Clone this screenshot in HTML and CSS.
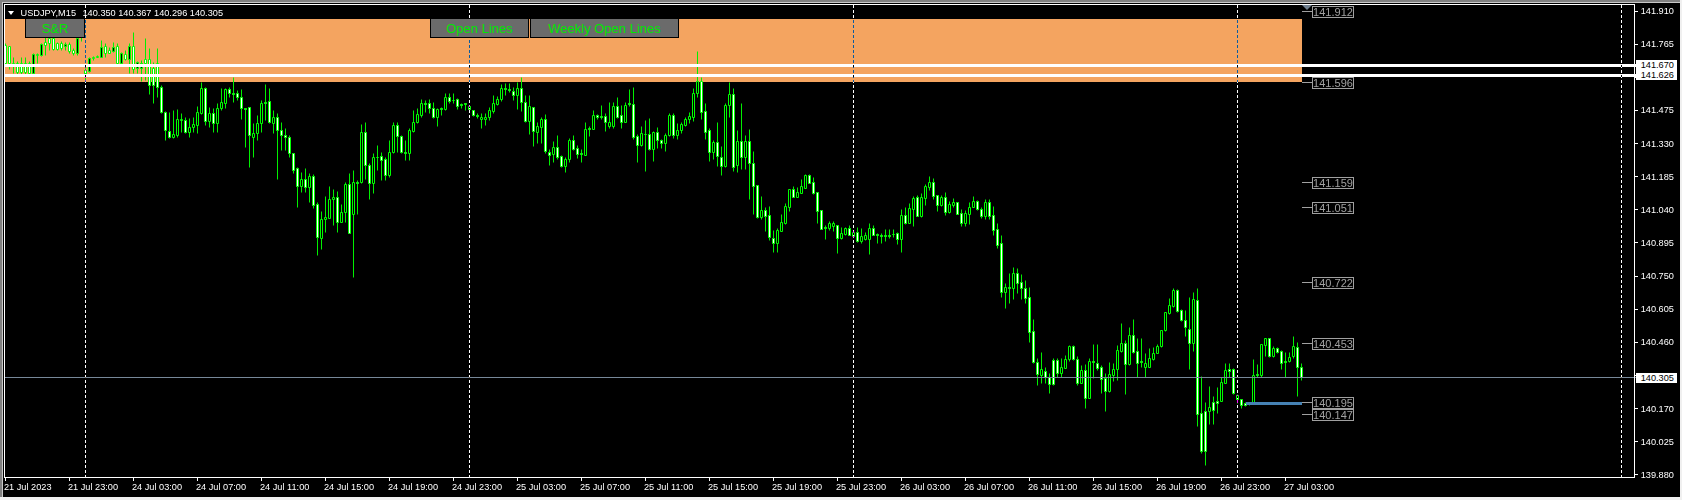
FILE: index.html
```html
<!DOCTYPE html>
<html lang="en">
<head>
<meta charset="utf-8">
<title>USDJPY,M15</title>
<link rel="stylesheet" href="styles.css">
</head>
<body>
<main class="terminal">
  <section class="plot">
    <svg class="chart" viewBox="5 5 1629 472" width="1629" height="472" aria-hidden="true">
      <rect class="zone" x="5" y="19" width="1297" height="63"/>
      <path id="wicks" class="wick"/>
      <path id="bodies-open" class="body-open"/>
      <path id="bodies-solid" class="body-solid"/>
      <rect class="level" x="5" y="64" width="1629" height="3"/>
      <rect class="level" x="5" y="74" width="1629" height="3"/>
      <rect class="bid" x="5" y="377" width="1629" height="1"/>
      <rect class="support" x="1246" y="402" width="56" height="3"/>
      <polygon class="marker" points="1302,5 1312,5 1307,10"/>
      <g class="periods">
        <line x1="85.5" y1="5" x2="85.5" y2="477"/>
        <line x1="469.5" y1="5" x2="469.5" y2="477"/>
        <line x1="853.5" y1="5" x2="853.5" y2="477"/>
        <line x1="1237.5" y1="5" x2="1237.5" y2="477"/>
        <line x1="1621.5" y1="5" x2="1621.5" y2="477"/>
      </g>
    </svg>

    <header class="legend">
      <span class="legend-arrow"></span>
      <span class="legend-symbol">USDJPY,M15</span>
      <span class="legend-quote">140.350 140.367 140.296 140.305</span>
    </header>

    <button class="tool tool-sr" type="button">S&amp;R</button>
    <button class="tool tool-open" type="button">Open Lines</button>
    <button class="tool tool-weekly" type="button">Weekly Open Lines</button>

    <span class="tag tag-1">141.912</span>
    <span class="tag tag-2">141.596</span>
    <span class="tag tag-3">141.159</span>
    <span class="tag tag-4">141.051</span>
    <span class="tag tag-5">140.722</span>
    <span class="tag tag-6">140.453</span>
    <span class="tag tag-7">140.195</span>
    <span class="tag tag-8">140.147</span>
  </section>

  <aside class="price-axis">
    <div class="price">141.910</div>
    <div class="price">141.765</div>
    <div class="price"></div>
    <div class="price">141.475</div>
    <div class="price">141.330</div>
    <div class="price">141.185</div>
    <div class="price">141.040</div>
    <div class="price">140.895</div>
    <div class="price">140.750</div>
    <div class="price">140.605</div>
    <div class="price">140.460</div>
    <div class="price"></div>
    <div class="price">140.170</div>
    <div class="price">140.025</div>
    <div class="price">139.880</div>
    <span class="flag flag-1">141.670</span>
    <span class="flag flag-2">141.626</span>
    <span class="flag flag-3">140.305</span>
  </aside>

  <footer class="time-axis">
    <div class="time">21 Jul 2023</div>
    <div class="time">21 Jul 23:00</div>
    <div class="time">24 Jul 03:00</div>
    <div class="time">24 Jul 07:00</div>
    <div class="time">24 Jul 11:00</div>
    <div class="time">24 Jul 15:00</div>
    <div class="time">24 Jul 19:00</div>
    <div class="time">24 Jul 23:00</div>
    <div class="time">25 Jul 03:00</div>
    <div class="time">25 Jul 07:00</div>
    <div class="time">25 Jul 11:00</div>
    <div class="time">25 Jul 15:00</div>
    <div class="time">25 Jul 19:00</div>
    <div class="time">25 Jul 23:00</div>
    <div class="time">26 Jul 03:00</div>
    <div class="time">26 Jul 07:00</div>
    <div class="time">26 Jul 11:00</div>
    <div class="time">26 Jul 15:00</div>
    <div class="time">26 Jul 19:00</div>
    <div class="time">26 Jul 23:00</div>
    <div class="time">27 Jul 03:00</div>
  </footer>
</main>
<script src="candles.js"></script>
</body>
</html>
```

FILE: styles.css
```css
html, body {
  margin: 0;
  height: 500px;
  background: #f0f0f0;
  overflow: hidden;
}

.terminal {
  box-sizing: border-box;
  width: 1680px;
  height: 497px;
  padding: 2px 0 0 2px;
  border-left: 2px solid #808080;
  border-top: 2px solid #808080;
  box-shadow: inset 1px 1px 0 #c8c8c8;
  background: #000;
  display: grid;
  grid-template-columns: 1631px 45px;
  grid-template-rows: 474px 19px;
  font: 9.2px/12px "Liberation Sans", Arial, sans-serif;
  color: #fff;
}

/* plot */
.plot {
  position: relative;
  box-sizing: border-box;
  border: 1px solid #fff;
  overflow: hidden;
}
.chart { display: block; }
.zone { fill: #f4a460; }
.wick { fill: none; stroke: #00f000; stroke-width: 1; }
.body-open { fill: #fff; stroke: #00ff00; stroke-width: 1; }
.body-solid { fill: #000; stroke: #00ff00; stroke-width: 1; }
.level { fill: #fff; }
.bid { fill: #778899; }
.support { fill: #4682b4; }
.marker { fill: #708090; }
.periods line {
  stroke: #fff;
  stroke-width: 1;
  stroke-dasharray: 3 2;
  mix-blend-mode: difference;
}

/* legend */
.legend {
  position: absolute;
  left: 3px;
  top: 2px;
  display: flex;
  align-items: center;
  height: 12px;
}
.legend-arrow {
  width: 0;
  height: 0;
  border-left: 3.5px solid transparent;
  border-right: 3.5px solid transparent;
  border-top: 4px solid #fff;
  margin-right: 6.5px;
}
.legend-quote { margin-left: 6.5px; }

/* buttons */
.tool {
  position: absolute;
  top: 14px;
  height: 19px;
  box-sizing: border-box;
  padding: 0;
  border: 1px solid #000;
  border-top: 0;
  background: #6b6b6b;
  color: #00e600;
  font: 13px/17px "Liberation Sans", Arial, sans-serif;
  text-align: center;
}
.tool-sr { left: 20px; width: 60px; }
.tool-open { left: 425px; width: 99px; }
.tool-weekly { left: 525px; width: 149px; }

/* object tags */
.tag {
  position: absolute;
  left: 1307px;
  box-sizing: border-box;
  width: 42px;
  height: 12px;
  border: 1px solid #a0a0a0;
  color: #a0a0a0;
  font-size: 11px;
  line-height: 10px;
  text-align: center;
}
.tag::before {
  content: "";
  position: absolute;
  left: -11px;
  top: 4px;
  width: 10px;
  height: 1px;
  background: #a0a0a0;
}
.tag-1 { top: 1px; }
.tag-2 { top: 72px; }
.tag-3 { top: 172px; }
.tag-4 { top: 197px; }
.tag-5 { top: 272px; }
.tag-6 { top: 333px; }
.tag-7 { top: 392px; }
.tag-8 { top: 404px; }

/* price axis */
.price-axis {
  position: relative;
  grid-column: 2;
  grid-row: 1 / 3;
  display: flex;
  flex-direction: column;
  gap: 21.14px;
  padding-top: 1px;
}
.price {
  display: flex;
  align-items: center;
  flex: none;
  height: 12px;
  padding-left: 6px;
}
.price::before {
  content: "";
  width: 3px;
  height: 1px;
  margin-right: 2.7px;
  margin-left: -6px;
  background: #fff;
}
.flag {
  position: absolute;
  left: 1px;
  width: 41px;
  height: 10px;
  box-sizing: border-box;
  padding-left: 4.7px;
  background: #fff;
  color: #000;
  line-height: 10px;
}
.flag::before {
  content: "";
  position: absolute;
  left: -1px;
  width: 1px;
  height: 3px;
  top: 4px;
  background: #fff;
}
.flag-1 { top: 56px; }
.flag-2 { top: 66px; }
.flag-3 { top: 369px; }
.flag-3::before { height: 1px; background: #778899; }

/* time axis */
.time-axis {
  grid-column: 1;
  grid-row: 2;
  display: flex;
}
.time {
  flex: 0 0 64px;
  white-space: nowrap;
}
.time::before {
  content: "";
  display: block;
  width: 1px;
  height: 3px;
  margin-left: 1px;
  background: #fff;
}
```

FILE: candles.js
```js
// Candles sit every 4px from x = 5. Each row: high,bodyTop,bodyBottom,low,fill
// (values are thirds of a pixel below the block's base y; fill 1 = white, 0 = black).
const BLOCKS = [
  [0, `128,135,190,190,1 138,138,190,208,1 172,188,192,218,1 183,190,215,222,1 172,190,215,225,1 172,190,215,222,1 183,190,218,222,1 160,162,218,220,0 160,162,165,190,1 130,132,165,168,0 110,125,135,165,1 105,113,130,150,1 100,113,146,150,1 125,130,146,150,1 122,128,143,150,1 125,132,138,150,0 125,132,152,160,1 145,150,160,165,1 105,113,160,165,0 100,112,112,122,1 205,210,220,240,0 172,175,212,215,0 168,170,175,180,1 165,168,170,172,1 120,140,170,172,0 130,138,158,170,1 140,150,158,160,1 125,140,152,155,0 130,138,190,192,1 155,160,190,192,0 150,163,176,180,1 130,138,178,218,0 97,138,208,220,1 182,185,205,220,0 180,188,205,242,0 113,178,190,240,1 143,178,255,282,1 185,205,255,310,1 145,190,262,290,1 255,262,335,340,1 333,335,390,420,1 335,392,410,415,1 330,402,412,415,0 326,358,404,410,0 340,358,360,395,0 352,360,395,400,1 355,382,395,410,0 350,372,382,395,0 318,337,374,400,0 247,264,340,342,0 262,264,362,375,1 322,340,362,382,0 325,340,368,395,1 310,325,368,395,0 263,306,325,330,0 265,268,308,325,0 262,268,278,290,1 232,280,282,305,1 270,280,292,300,1 268,292,325,358,1 325,325,326,440,1 320,322,404,500,1 370,400,412,472,0 345,370,400,420,0 300,310,370,395,0 252,307,309,360,1 265,304,367,370,1 330,352,370,400,0 340,352,390,537,1 365,390,404,450,1 385,404,410,450,1 405,410,460,470,1 458,460,510,518,1`],
  [170, `-10,-5,47,110,1 6,28,48,65,0 -5,28,52,65,1 10,18,52,95,0 12,18,106,113,1 97,103,200,255,1 123,148,203,236,0 78,140,148,185,0 48,88,143,143,0 57,80,88,165,0 63,80,155,185,1 102,127,157,157,0 36,42,127,157,0 10,42,190,190,1 0,37,133,322,0 30,37,38,132,1 -138,-113,35,38,0 -143,-113,-15,27,1 -20,-15,38,87,1 -50,-40,38,70,0 -75,-40,-38,0,1 -55,-42,-30,30,1 -40,-32,14,30,1 -90,-55,14,20,0 -145,-135,-55,-50,0 -145,-135,-103,-55,1 -105,-102,-55,-50,1 -90,-55,-50,-30,1 -125,-120,-50,-30,0 -180,-143,-117,-115,0 -185,-167,-143,-140,0`],
  [60, `118,130,165,170,0 120,130,132,155,1 118,130,145,160,1 125,145,170,175,1 145,147,170,197,0 140,144,147,165,1 100,112,146,150,0 99,112,122,130,1 99,119,121,130,1 115,118,137,147,1 130,132,135,145,1 128,130,133,150,1 135,137,146,148,1 150,151,166,168,1 160,166,168,175,1 158,170,177,204,0 158,170,177,195,0 140,151,170,180,0 105,130,152,160,0 108,117,131,135,0 72,85,118,122,0 68,85,88,105,1 68,87,89,95,1 80,92,104,120,1 65,85,105,148,0 50,85,127,153,1 105,127,183,186,1 105,139,182,222,0 140,142,212,258,1 185,198,215,248,0 170,178,200,248,0 162,178,272,278,1 268,275,284,315,1 243,262,281,305,0 225,262,292,298,1 285,289,317,320,1 290,298,317,335,0 235,240,298,305,0 225,240,267,270,1 255,265,281,293,1 267,280,282,305,1 187,208,284,285,0 198,205,207,227,1 150,166,206,208,0 162,166,172,178,1 135,169,171,178,1 160,169,187,212,1 127,187,197,205,0 125,138,197,205,0 112,138,170,175,1 135,165,185,203,1 125,136,185,187,0 87,130,132,137,1 82,133,230,238,1 222,229,254,305,1 198,220,254,257,0 180,221,223,332,1 175,222,268,270,1 214,216,268,302,0 200,217,239,265,1 237,241,248,265,1 220,226,248,272,0 160,165,226,228,0 160,165,224,233,1 190,210,224,238,0 185,192,210,218,0 170,178,194,198,0 157,168,176,188,0 85,100,170,184,0 -27,62,100,110,0 50,62,155,177,1 130,153,215,236,1 205,210,275,303,1 240,247,275,297,0 187,245,287,317,1 258,290,317,345,1 130,135,318,322,0 65,102,136,172,0`],
  [150, `-186,-168,50,63,1 -60,-27,44,66,0 -140,-27,20,57,1 -45,-27,20,57,0 -63,-27,40,146,1 3,40,107,192,1 104,106,200,203,1 138,181,200,207,0 172,181,197,243,1 168,196,262,270,1 240,263,278,305,1 235,241,278,305,0 193,217,242,244,0 160,168,219,222,0 118,118,170,183,0 108,118,140,142,1 112,127,140,142,0 87,108,128,130,0 73,76,113,115,0 72,76,98,100,1 82,97,128,131,1 126,127,182,218,1 180,181,236,238,1 226,232,234,267,1 212,219,233,240,0 213,220,227,242,0 224,226,263,308,1 232,250,263,266,0 230,235,251,255,0 226,235,254,256,1 242,247,257,260,0 232,247,272,275,1 235,259,274,279,0 247,256,266,270,0 220,235,266,311,0 225,235,254,256,1 250,253,255,278,1 250,256,258,278,1 238,256,258,273,1 238,255,257,265,1 238,251,253,262,1 246,250,266,281,1 178,196,266,305,0 170,196,218,222,1 160,175,218,220,0 137,145,176,228,0 135,141,197,199,1 130,141,197,200,0 103,108,143,165,0 78,97,110,120,0 85,97,137,146,1 135,136,164,183,1 135,142,164,167,0 126,142,185,195,1 152,163,185,190,0 143,156,164,170,0 155,156,191,191,1 178,190,218,228,1 180,190,218,228,0 155,172,191,222,0 138,154,170,172,0 150,154,178,180,1 170,178,197,205,1 148,157,197,208,0 147,157,197,208,1 168,196,240,256,1 220,238,284,293,1`],
  [270, `-105,-81,65,80,1 40,52,65,115,0 10,50,53,100,1 -10,10,55,88,0 -5,10,38,70,1 12,35,53,88,1 30,53,83,98,1 50,82,185,215,1 148,184,275,280,1 265,275,313,345,1 247,298,315,338,0 290,302,322,338,1 310,322,342,370,1 265,270,342,345,1 265,270,308,322,1 265,292,308,322,0 255,268,293,295,0 225,228,268,272,0 225,228,268,270,1 258,268,340,345,1 285,300,340,340,0 283,300,383,413,1 265,272,383,385,0 222,274,276,325,1 222,280,295,300,1 285,292,326,368,1 310,325,362,422,1 277,313,362,365,0 280,298,315,332,0 225,240,298,330,0 160,220,242,245,0 210,220,283,372,1 170,196,283,285,0 148,196,247,250,1 205,244,280,322,1 205,274,276,292,1 250,278,290,322,0 235,265,290,292,0 232,248,267,270,0 222,228,248,250,0 180,181,228,232,0 125,127,181,183,0 85,105,130,133,0 55,60,108,110,0 58,60,124,126,1 118,120,150,152,1 120,150,172,197,1 82,178,220,297,1 65,88,220,243,0 55,90,433,468,1 318,430,542,548,1 395,423,542,585,1 348,411,422,463,0 378,397,420,462,1 350,392,398,428,1 322,337,392,394,0 278,300,338,340,0 280,298,302,320,1 295,297,368,372,1 372,375,388,400,1 388,388,404,415,1 396,398,405,407,1 397,399,401,404,1 268,316,400,403,0 282,313,315,320,1 222,223,316,320,0 203,205,224,258,0 203,205,257,260,1 228,235,258,262,0 232,235,245,250,1 240,243,278,298,1 245,274,276,322,1 245,260,272,275,0 198,229,258,265,0 215,232,292,377,1 280,292,322,330,1`]
];

let wicks = "", open = "", solid = "", index = 0;
for (const [base, rows] of BLOCKS) {
  const toY = v => Math.round(base + v / 3) + 0.5;
  for (const row of rows.split(" ")) {
    const [hi, top, bot, lo, fill] = row.split(",").map(Number);
    const x = 5 + 4 * index++;
    wicks += `M${x + 0.5} ${toY(hi)}V${toY(lo)}`;
    const body = `M${x - 0.5} ${toY(top)}h2V${toY(bot)}h-2z`;
    if (fill) open += body; else solid += body;
  }
}
document.getElementById("wicks").setAttribute("d", wicks);
document.getElementById("bodies-open").setAttribute("d", open);
document.getElementById("bodies-solid").setAttribute("d", solid);
```
